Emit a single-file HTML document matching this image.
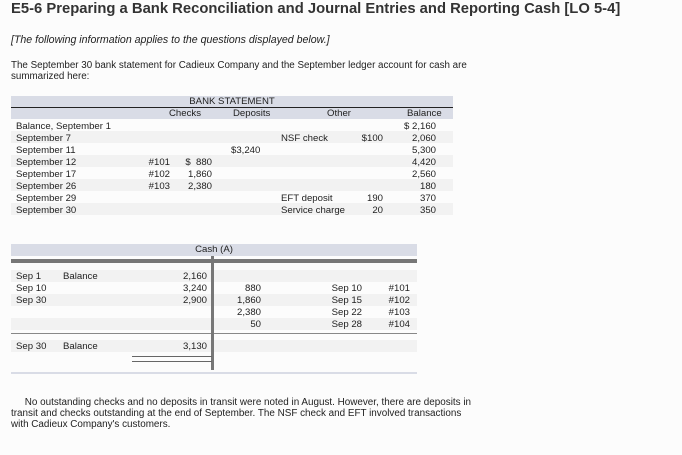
<!DOCTYPE html>
<html><head><meta charset="utf-8"><style>
body{margin:0;width:682px;height:455px;background:#fcfcfc;font-family:"Liberation Sans",sans-serif;color:#222;position:relative;overflow:hidden}
.a{position:absolute;white-space:nowrap;font-size:9.6px;line-height:12px}
.t{margin-top:1px}
.r{text-align:right}
.band{position:absolute;background:#d9dce6}
.row{position:absolute;left:11px;height:12px;background:#f2f2f2}
</style></head><body>
<div class="a" style="left:11px;top:0px;font-size:14.8px;line-height:18px;font-weight:bold;color:#333">E5-6 Preparing a Bank Reconciliation and Journal Entries and Reporting Cash [LO 5-4]</div>
<div class="a" style="left:11px;top:34px;font-style:italic;font-size:10.6px">[The following information applies to the questions displayed below.]</div>
<div class="a" style="left:11px;top:60px;font-size:9.8px;line-height:11px">The September 30 bank statement for Cadieux Company and the September ledger account for cash are<br>summarized here:</div>

<div class="band" style="left:11px;top:96px;width:442px;height:11px"></div>
<div style="position:absolute;left:11px;top:107px;width:442px;height:1px;background:#222"></div>
<div class="band" style="left:11px;top:108px;width:442px;height:11px"></div>
<div class="row" style="top:131px;width:442px"></div>
<div class="row" style="top:155px;width:442px"></div>
<div class="row" style="top:179px;width:442px"></div>
<div class="row" style="top:203px;width:442px"></div>
<div class="a t" style="left:11px;width:442px;top:95px;text-align:center">BANK STATEMENT</div>
<div class="a t" style="left:169px;top:107px">Checks</div>
<div class="a t" style="left:233px;top:107px">Deposits</div>
<div class="a t" style="left:327px;top:107px">Other</div>
<div class="a t" style="left:407px;top:107px">Balance</div>
<div class="a t" style="left:16px;top:120px;line-height:12px">Balance, September 1<br>September 7<br>September 11<br>September 12<br>September 17<br>September 26<br>September 29<br>September 30</div>
<div class="a r t" style="left:140px;width:30px;top:156px">#101<br>#102<br>#103</div>
<div class="a r t" style="left:175px;width:37px;top:156px">$&nbsp;&nbsp;880<br>1,860<br>2,380</div>
<div class="a t" style="left:231px;top:144px">$3,240</div>
<div class="a t" style="left:281px;top:132px">NSF check</div>
<div class="a t" style="left:281px;top:192px">EFT deposit<br>Service charge</div>
<div class="a r t" style="left:350px;width:33px;top:132px">$100</div>
<div class="a r t" style="left:350px;width:33px;top:192px">190<br>20</div>
<div class="a r t" style="left:390px;width:46px;top:120px">$ 2,160<br>2,060<br>5,300<br>4,420<br>2,560<br>180<br>370<br>350</div>

<div class="band" style="left:11px;top:244px;width:406px;height:12px"></div>
<div class="a t" style="left:11px;width:406px;top:243px;text-align:center">Cash (A)</div>
<div style="position:absolute;left:11px;top:259px;width:406px;height:4px;background:#777"></div>
<div class="row" style="top:270px;width:406px"></div>
<div class="row" style="top:294px;width:406px"></div>
<div class="row" style="top:318px;width:406px"></div>
<div class="row" style="top:340px;width:406px"></div>
<div style="position:absolute;left:11px;top:333px;width:406px;height:1px;background:#888"></div>
<div style="position:absolute;left:211px;top:256px;width:3px;height:114px;background:#777"></div>
<div class="a t" style="left:16px;top:270px">Sep 1<br>Sep 10<br>Sep 30</div>
<div class="a t" style="left:63px;top:270px">Balance</div>
<div class="a r t" style="left:170px;width:37px;top:270px">2,160<br>3,240<br>2,900</div>
<div class="a r t" style="left:220px;width:41px;top:282px">880<br>1,860<br>2,380<br>50</div>
<div class="a r t" style="left:320px;width:42px;top:282px">Sep 10<br>Sep 15<br>Sep 22<br>Sep 28</div>
<div class="a r t" style="left:380px;width:30px;top:282px">#101<br>#102<br>#103<br>#104</div>
<div class="a t" style="left:16px;top:340px">Sep 30</div>
<div class="a t" style="left:63px;top:340px">Balance</div>
<div class="a r t" style="left:170px;width:37px;top:340px">3,130</div>
<div style="position:absolute;left:132px;top:356px;width:80px;height:1px;background:#666"></div>
<div style="position:absolute;left:132px;top:361px;width:80px;height:1px;background:#666"></div>
<div style="position:absolute;left:11px;top:372px;width:406px;height:2px;background:#d9dce6"></div>

<div class="a" style="left:11px;top:397px;font-size:9.9px;line-height:11px">&nbsp;&nbsp;&nbsp;&nbsp;&nbsp;No outstanding checks and no deposits in transit were noted in August. However, there are deposits in<br>transit and checks outstanding at the end of September. The NSF check and EFT involved transactions<br>with Cadieux Company's customers.</div>
</body></html>
